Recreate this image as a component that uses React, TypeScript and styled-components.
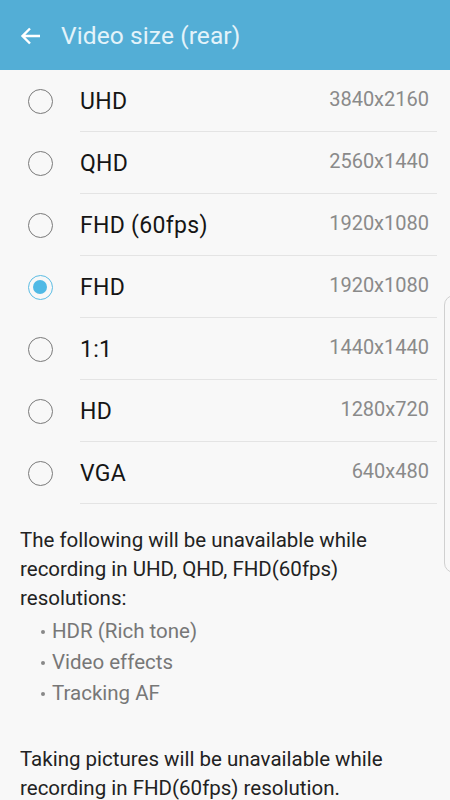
import React from 'react';
import styled, { createGlobalStyle } from 'styled-components';

const GlobalStyle = createGlobalStyle`
	html, body {
		margin: 0;
		padding: 0;
		background: #f8f8f8;
	}
	body {
		font-family: Roboto, 'Noto Sans', 'Liberation Sans', sans-serif;
	}
`;

const Screen = styled.div`
	position: relative;
	width: 450px;
	height: 800px;
	overflow: hidden;
	background: #f8f8f8;
`;

const Header = styled.header`
	display: flex;
	align-items: center;
	height: 70px;
	padding: 0 0 0 19px;
	background: #53aed6;
	box-sizing: border-box;
`;

const BackButton = styled.div`
	display: flex;
	width: 24px;
	height: 24px;
	margin-right: 18px;
	margin-top: 2px;
`;

const Title = styled.h1`
	margin: 0;
	font-size: 24.5px;
	font-weight: 400;
	color: #e3f3fa;
	letter-spacing: 0.1px;
`;

const List = styled.div`
	display: flex;
	flex-direction: column;
`;

const Row = styled.div`
	display: flex;
	align-items: center;
	height: 62px;
`;

const RadioCell = styled.div`
	display: flex;
	justify-content: center;
	width: 80px;
	box-sizing: border-box;
`;

const Radio = styled.div<{ $checked: boolean }>`
	position: relative;
	width: 25px;
	height: 25px;
	border-radius: 50%;
	box-sizing: border-box;
	border: 1.5px solid ${(p) => (p.$checked ? '#5cbde4' : '#7a7a7a')};
	&::after {
		content: '';
		display: ${(p) => (p.$checked ? 'block' : 'none')};
		position: absolute;
		left: 50%;
		top: 50%;
		width: 14px;
		height: 14px;
		margin: -7px 0 0 -7px;
		border-radius: 50%;
		background: #4fb9e5;
	}
`;

const RowBody = styled.div`
	flex: 1;
	display: flex;
	align-items: center;
	justify-content: space-between;
	align-self: stretch;
	margin-right: 13px;
	padding-right: 8px;
	border-bottom: 1px solid #e4e4e4;
`;

const Label = styled.span`
	font-size: 23px;
	letter-spacing: 0.3px;
	color: #151515;
	padding-top: 2px;
`;

const Value = styled.span`
	font-size: 20px;
	color: #8a8a8a;
	padding-bottom: 4px;
`;

const Notes = styled.div`
	padding: 22px 20px 0 20px;
`;

const Paragraph = styled.p<{ $gap?: number }>`
	margin: ${(p) => p.$gap ?? 0}px 0 0 0;
	font-size: 20.5px;
	line-height: 29px;
	color: #222;
`;

const Bullets = styled.ul`
	list-style: none;
	margin: 3px 0 0 0;
	padding: 0 0 0 20px;
`;

const Bullet = styled.li`
	display: flex;
	align-items: center;
	font-size: 20.5px;
	line-height: 31px;
	color: #777;
	&::before {
		content: '';
		width: 4px;
		height: 4px;
		border-radius: 50%;
		background: #888;
		margin: 0 7px 0 1px;
	}
`;

const ScrollHandle = styled.div`
	position: absolute;
	left: 444px;
	top: 295px;
	width: 20px;
	height: 278px;
	border: 1px solid #d0d0d0;
	border-radius: 10px;
	box-sizing: border-box;
`;

const sizes = [
	{ name: 'UHD', res: '3840x2160' },
	{ name: 'QHD', res: '2560x1440' },
	{ name: 'FHD (60fps)', res: '1920x1080' },
	{ name: 'FHD', res: '1920x1080', checked: true },
	{ name: '1:1', res: '1440x1440' },
	{ name: 'HD', res: '1280x720' },
	{ name: 'VGA', res: '640x480' },
];

export default function App() {
	return (
		<Screen>
			<GlobalStyle />
			<Header>
				<BackButton>
					<svg width="24" height="24" viewBox="0 0 24 24" fill="none">
						<path d="M21 12H4M11 4.5L3.5 12L11 19.5" stroke="#ffffff" strokeWidth="2.4" />
					</svg>
				</BackButton>
				<Title>Video size (rear)</Title>
			</Header>
			<List>
				{sizes.map((s) => (
					<Row key={s.name}>
						<RadioCell>
							<Radio $checked={!!s.checked} />
						</RadioCell>
						<RowBody>
							<Label>{s.name}</Label>
							<Value>{s.res}</Value>
						</RowBody>
					</Row>
				))}
			</List>
			<Notes>
				<Paragraph>
					The following will be unavailable while recording in UHD, QHD, FHD(60fps) resolutions:
				</Paragraph>
				<Bullets>
					<Bullet>HDR (Rich tone)</Bullet>
					<Bullet>Video effects</Bullet>
					<Bullet>Tracking AF</Bullet>
				</Bullets>
				<Paragraph $gap={36}>
					Taking pictures will be unavailable while recording in FHD(60fps) resolution.
				</Paragraph>
			</Notes>
			<ScrollHandle />
		</Screen>
	);
}
